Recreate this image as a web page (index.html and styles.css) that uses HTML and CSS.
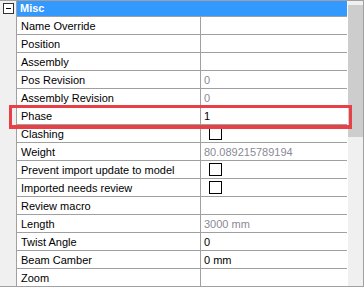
FILE: index.html
```html
<!DOCTYPE html>
<html>
<head>
<meta charset="utf-8">
<link rel="stylesheet" href="styles.css">
</head>
<body>
<div class="pg">
  <div class="grid">
    <div class="margin">
      <div class="toggle"><span class="minus"></span></div>
    </div>
    <div class="table">
      <div class="hdr">Misc</div>
      <div class="row"><div class="lab">Name Override</div><div class="val"></div></div>
      <div class="row"><div class="lab">Position</div><div class="val"></div></div>
      <div class="row"><div class="lab">Assembly</div><div class="val"></div></div>
      <div class="row"><div class="lab">Pos Revision</div><div class="val ro">0</div></div>
      <div class="row"><div class="lab">Assembly Revision</div><div class="val ro">0</div></div>
      <div class="row"><div class="lab">Phase</div><div class="val">1</div></div>
      <div class="row"><div class="lab">Clashing</div><div class="val"><span class="cb"></span></div></div>
      <div class="row"><div class="lab">Weight</div><div class="val ro">80.089215789194</div></div>
      <div class="row"><div class="lab">Prevent import update to model</div><div class="val"><span class="cb"></span></div></div>
      <div class="row"><div class="lab">Imported needs review</div><div class="val"><span class="cb"></span></div></div>
      <div class="row"><div class="lab">Review macro</div><div class="val"></div></div>
      <div class="row"><div class="lab">Length</div><div class="val ro">3000 mm</div></div>
      <div class="row"><div class="lab">Twist Angle</div><div class="val">0</div></div>
      <div class="row"><div class="lab">Beam Camber</div><div class="val">0 mm</div></div>
      <div class="row last"><div class="lab">Zoom</div><div class="val"></div></div>
    </div>
  </div>
  <div class="gap"></div>
  <div class="scroll"><div class="thumb"></div></div>
  <div class="hilite"></div>
</div>
</body>
</html>
```
FILE: styles.css
```css
html, body { margin: 0; padding: 0; background: #fff; }
.pg {
  position: relative;
  width: 364px;
  height: 287px;
  box-sizing: border-box;
  border-top: 1px solid #a0a0a0;
  border-right: 1px solid #a0a0a0;
  border-bottom: 1px solid #a0a0a0;
  display: flex;
  font-family: "Liberation Sans", Arial, sans-serif;
  font-size: 11px;
  color: #000;
}
.grid { display: flex; width: 347px; }
.margin { width: 16px; background: #f0f0f0; }
.toggle {
  margin: 2px 0 0 3px;
  width: 9px; height: 9px;
  border: 1px solid #333;
  background: #fff;
  box-sizing: content-box;
  display: flex; align-items: center; justify-content: center;
}
.minus { width: 5px; height: 1px; background: #000; }
.table { flex: 1; border-left: 1px solid #a0a0a0; display: flex; flex-direction: column; }
.hdr {
  height: 15px; line-height: 15px;
  background: #3399ff; color: #fff; font-weight: bold;
  padding-left: 3px;
  border-bottom: 1px solid #a0a0a0;
}
.row { display: flex; height: 17px; border-bottom: 1px solid #a0a0a0; }
.row.last { border-bottom: none; }
.lab { width: 184px; padding-left: 4px; box-sizing: border-box; border-right: 1px solid #a0a0a0; line-height: 18px; white-space: nowrap; }
.val { flex: 1; padding-left: 3px; line-height: 18px; display: flex; align-items: center; }
.val.ro { color: #8a8a96; }
.cb { width: 11px; height: 11px; border: 1px solid #000; background: #fff; margin-left: 5px; }
.gap { width: 1px; }
.scroll { width: 15px; background: #f0f0f0; padding-top: 4px; }
.thumb { height: 132px; background: #cdcdcd; }
.hilite {
  position: absolute;
  left: 9px; top: 103px;
  width: 343px; height: 25px;
  box-sizing: border-box;
  border: 3px solid #e94048;
  border-top-width: 3px;
  border-bottom-width: 4px;
  margin-top: 1px;
  height: 24px;
}
```
